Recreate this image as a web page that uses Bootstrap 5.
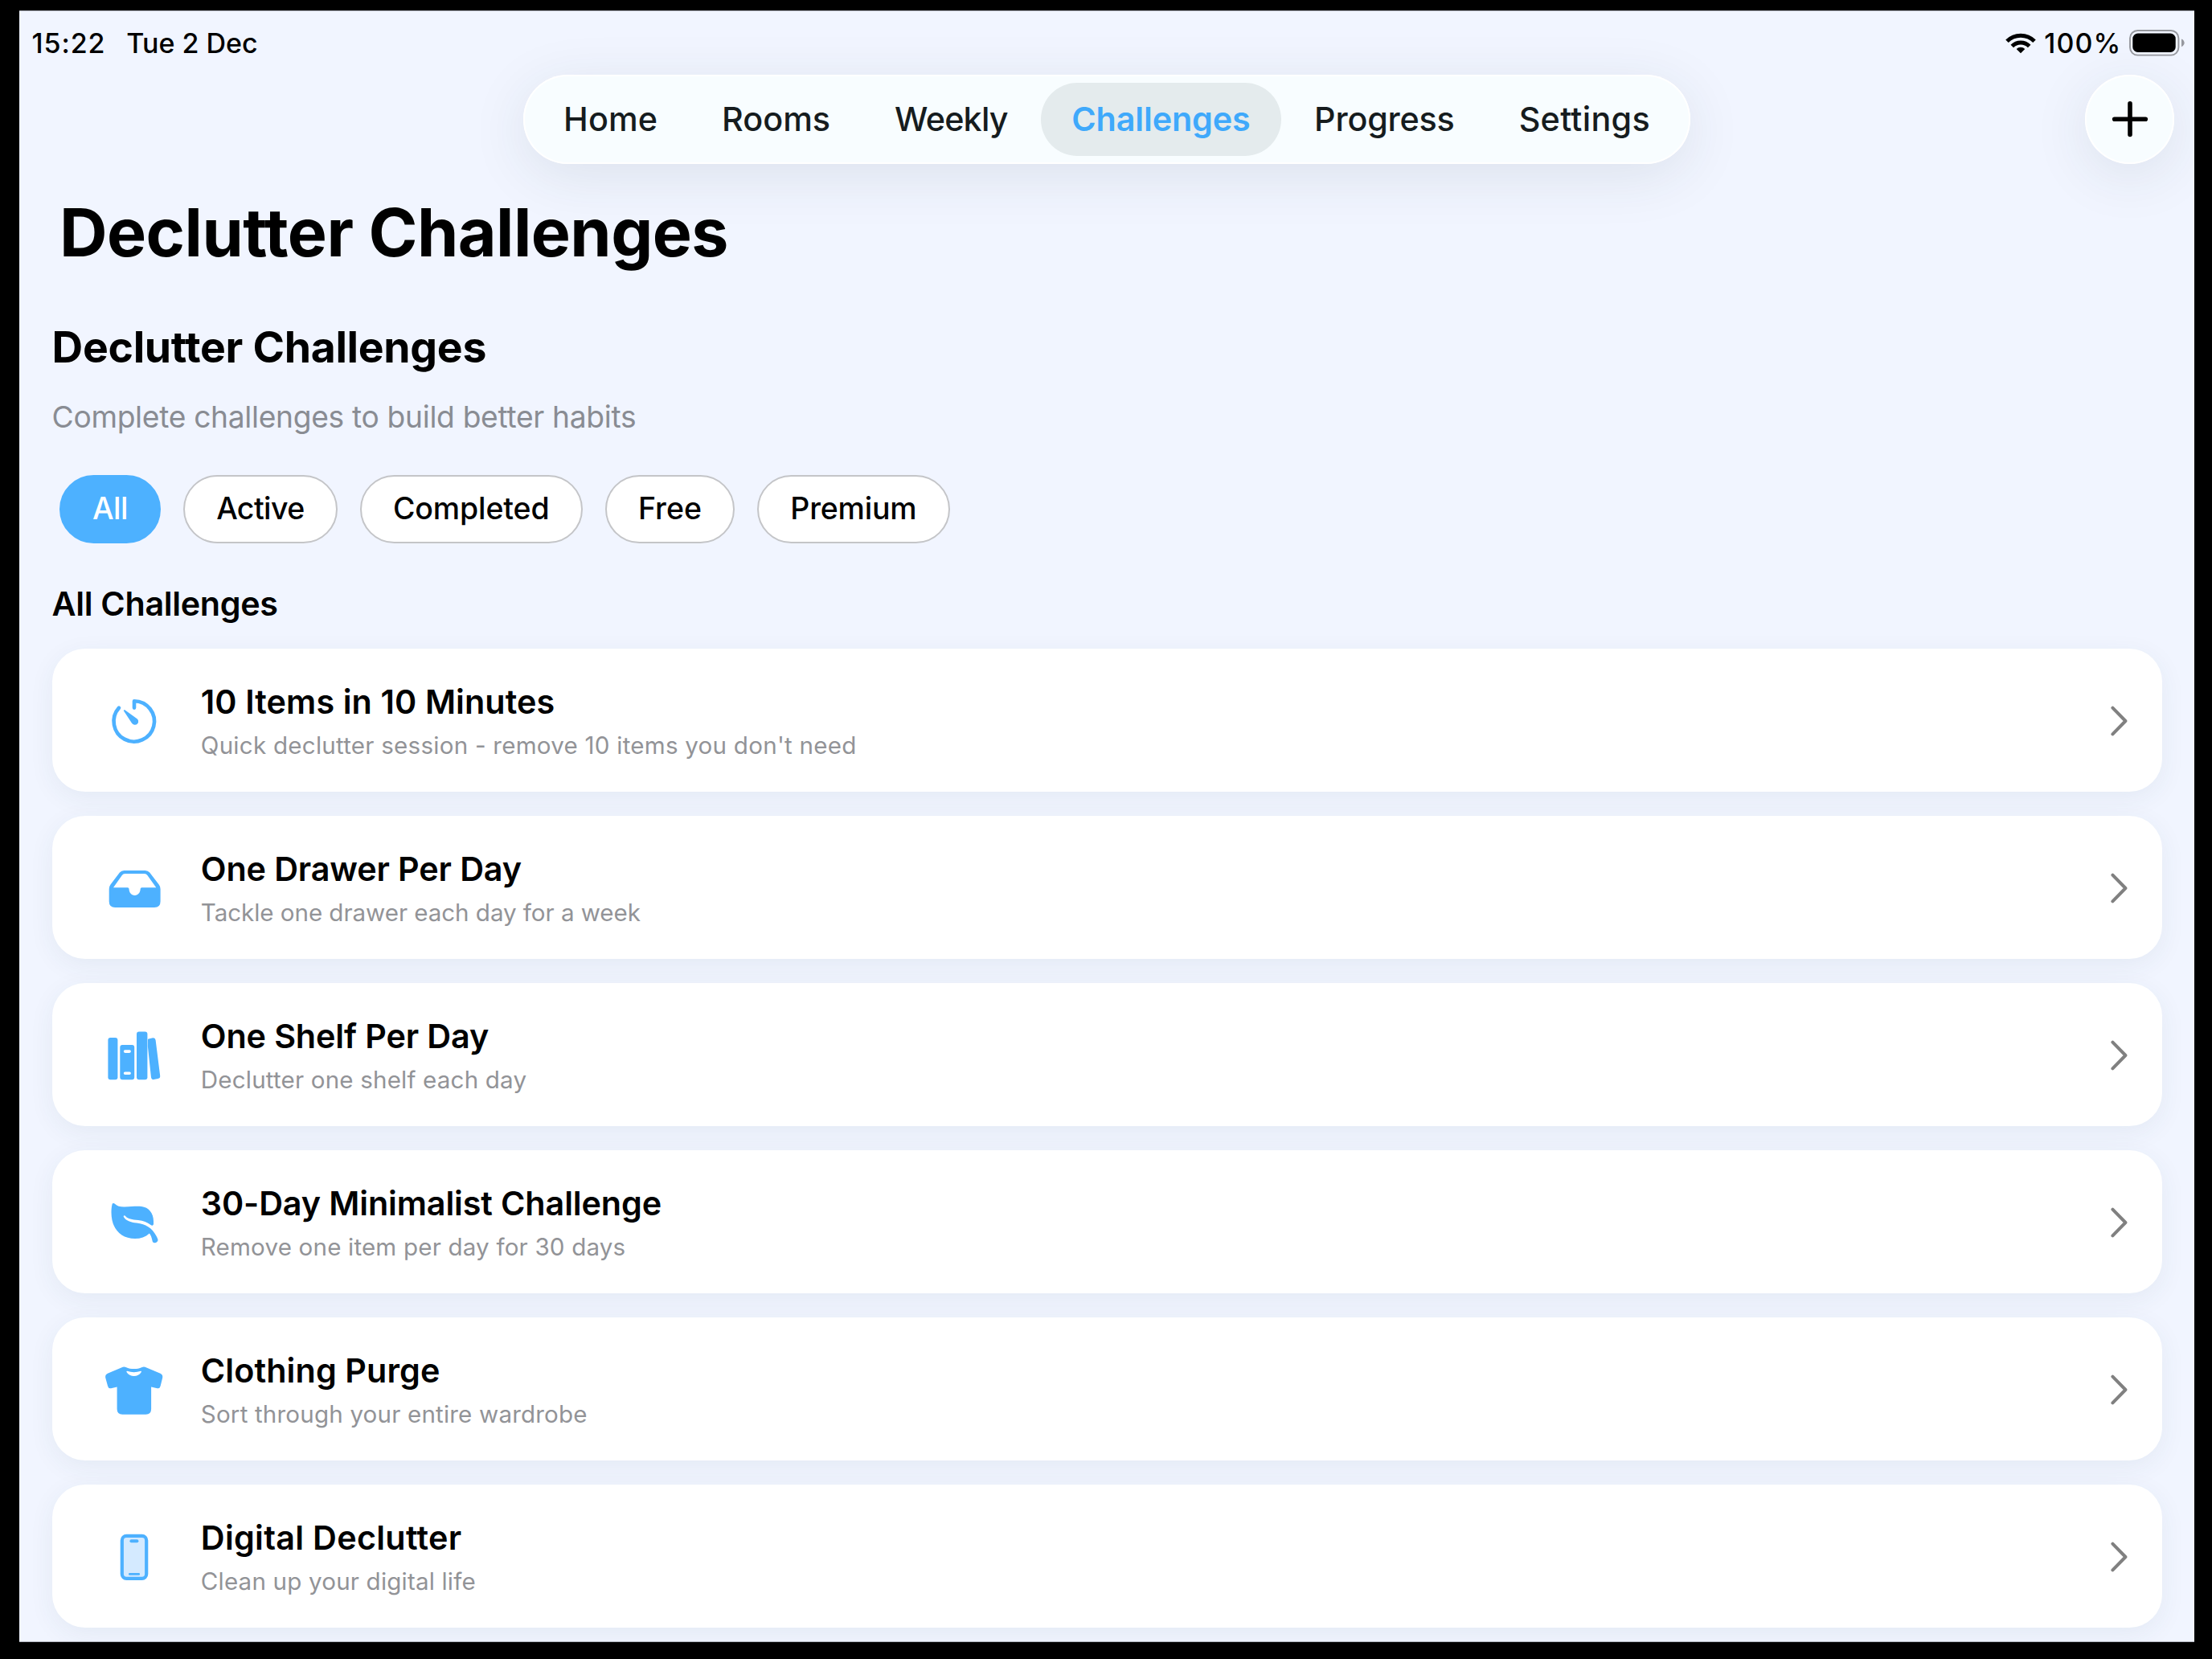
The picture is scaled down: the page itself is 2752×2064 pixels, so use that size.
<!DOCTYPE html>
<html lang="en">
<head>
<meta charset="utf-8">
<meta name="viewport" content="width=device-width, initial-scale=1">
<title>Declutter Challenges</title>
<link href="https://cdn.jsdelivr.net/npm/bootstrap@5.3.0/dist/css/bootstrap.min.css" rel="stylesheet">
<script src="https://cdn.jsdelivr.net/npm/bootstrap@5.3.0/dist/js/bootstrap.bundle.min.js" defer></script>
<style>
  :root { --sky: #4db1ff; --paper: #f1f5ff; --glass: #f8fdff; }
  html, body { height: 2064px; }
  body {
    font-family: Inter, "Liberation Sans", sans-serif;
    color: #000; background: #000; overflow: hidden;
    padding: 13px 22px 21px 24px;
  }
  .screen {
    height: 2030px; background: var(--paper); overflow: hidden;
    box-shadow: inset 0 1px 0 #b3b6bf, inset 0 -1px 0 #b3b6bf;
  }
  svg { display: block; flex: none; }

  .status-bar { height: 80.3px; padding: 1px 12.5px 0 15.5px; font-size: 34px; font-weight: 500; line-height: 40px; }
  .clock { letter-spacing: .9px; margin-right: 26px; }
  .charge { letter-spacing: 1.1px; margin: 0 9.1px 0 10.5px; }

  .top-row { height: 110.4px; padding: 0 25px; }
  .side { flex: 1 1 0; }
  .tab-pill, .add-btn { background: var(--glass); box-shadow: inset 0 0 0 2px #fff, 0 14px 70px rgba(40, 55, 70, .1); }
  .tab-pill { border-radius: 55.2px; padding: 10px; }
  .tab-pill .nav-link {
    height: 90.4px; padding: 0 40px; border-radius: 45.2px;
    font-size: 41.3px; font-weight: 500; line-height: 91.2px; color: #161c1e; white-space: nowrap;
  }
  .tab-pill .nav-link.active { background: #e4ebed; color: #3fa9fb; font-weight: 600; padding: 0 38.3px; margin: 0 1.2px; letter-spacing: -.13px; }
  .add-btn { width: 110.6px; height: 110.4px; padding: 0; border: 0; border-radius: 50%; }

  .page-title { font-size: 82.5px; font-weight: 700; line-height: 100px; letter-spacing: -.55px; margin: 35.3px 0 0 50px; }
  .content { padding: 60px 40.3px 0 40.6px; }
  .hero-title { font-size: 53.5px; font-weight: 700; line-height: 66px; letter-spacing: -.31px; margin: 0; }
  .hero-sub { font-size: 37.2px; line-height: 46px; letter-spacing: -.32px; color: #898c93; margin: 31.4px 0 48.8px; }
  .chips { gap: 28.2px; padding-left: 9.4px; }
  .chip {
    height: 85px; padding: 0 39.1px; border: 2.2px solid #c4c5c8; border-radius: 42.5px;
    background: #fff; color: #000; font-size: 37.5px; font-weight: 500; line-height: 80.6px;
  }
  .chip.active { background: var(--sky); border-color: var(--sky); color: #fff; }
  .section-title { font-size: 41.3px; font-weight: 600; line-height: 50px; letter-spacing: -.33px; margin: 49.6px 0 31.3px; }

  .challenges { gap: 30px; }
  .challenge {
    height: 178px; padding: 1px 42.8px 0 62px; border: 0; border-radius: 41px; background: #fff;
    box-shadow: 0 8px 32px rgba(40, 70, 90, .065);
  }
  .challenge-body { padding-left: 43.2px; }
  .challenge-name { font-size: 41.3px; font-weight: 600; line-height: 50px; margin: 0 0 10px; }
  .challenge-note { font-size: 29.6px; line-height: 38px; letter-spacing: .17px; color: #929397; margin: 0; }
  .glyph { fill: var(--sky); color: var(--sky); }
  .chevron { fill: none; stroke: #808080; stroke-width: 4; stroke-linecap: round; stroke-linejoin: round; }

  .tight-1 { letter-spacing: -.12px; }
  .tight-2 { letter-spacing: -.2px; }
  .tight-6 { letter-spacing: -.6px; }
  .tight-8 { letter-spacing: -.79px; }
  .loose-1 { letter-spacing: .1px; }
  .loose-3 { letter-spacing: .29px; }
  .note-wide { letter-spacing: .23px; }
  .note-tight { letter-spacing: -.06px; }
</style>
</head>
<body>
<main class="screen d-flex flex-column">

  <div class="status-bar d-flex align-items-center flex-shrink-0">
    <span class="clock">15:22</span>
    <span>Tue 2 Dec</span>
    <div class="d-flex align-items-center ms-auto">
      <svg width="38" height="26" viewBox="0 0 38 26" fill="none" stroke="#000" stroke-width="5">
        <path d="M2 10.2a24 24 0 0 1 34 0"/>
        <path d="M8.3 16.6a15 15 0 0 1 21.4 0"/>
        <path d="M19 25.3l5.3-5.2a7.4 7.4 0 0 0-10.6 0z" fill="#000" stroke="none"/>
      </svg>
      <span class="charge">100%</span>
      <svg width="69" height="33" viewBox="0 0 69 33">
        <rect x="1" y="1" width="60.4" height="30.6" rx="9.5" fill="none" stroke="#96989e" stroke-width="1.9"/>
        <rect x="4.3" y="4.6" width="53.4" height="23.4" rx="6.5"/>
        <path d="M65 11.4c4.8 1.8 4.8 8 0 9.8z" fill="#96989e"/>
      </svg>
    </div>
  </div>

  <div class="top-row d-flex align-items-center flex-shrink-0">
    <div class="side"></div>
    <nav class="tab-pill nav flex-nowrap">
      <a class="nav-link loose-1" href="#">Home</a>
      <a class="nav-link" href="#">Rooms</a>
      <a class="nav-link tight-8" href="#">Weekly</a>
      <a class="nav-link active" href="#">Challenges</a>
      <a class="nav-link tight-2" href="#">Progress</a>
      <a class="nav-link loose-3" href="#">Settings</a>
    </nav>
    <div class="side d-flex justify-content-end">
      <button class="add-btn d-flex align-items-center justify-content-center" aria-label="Add">
        <svg width="46" height="46" viewBox="0 0 46 46" fill="none" stroke="#000" stroke-width="5.6" stroke-linecap="round"><path d="M23 3.900v38.600M3.700 23.200h38.600"/></svg>
      </button>
    </div>
  </div>

  <h1 class="page-title">Declutter Challenges</h1>

  <section class="content">
    <h2 class="hero-title">Declutter Challenges</h2>
    <p class="hero-sub">Complete challenges to build better habits</p>

    <div class="chips d-flex">
      <button class="chip active tight-6">All</button>
      <button class="chip tight-6">Active</button>
      <button class="chip tight-1">Completed</button>
      <button class="chip">Free</button>
      <button class="chip tight-2">Premium</button>
    </div>

    <h3 class="section-title">All Challenges</h3>

    <div class="challenges d-flex flex-column">

      <article class="challenge card flex-row align-items-center">
        <svg class="glyph" width="80" height="80" viewBox="0 0 80 80">
          <path d="M40 23.600V15.200a25.200 25.200 0 1 1-19 8.400" fill="none" stroke="currentColor" stroke-width="4.600" stroke-linecap="round" stroke-linejoin="round"/>
          <path d="M27 27.600c-.5-.9.4-1.800 1.300-1.300l14.200 10.100a4.400 4.400 0 1 1-5.600 6.200z"/>
        </svg>
        <div class="challenge-body flex-grow-1">
          <h4 class="challenge-name loose-1">10 Items in 10 Minutes</h4>
          <p class="challenge-note note-wide">Quick declutter session - remove 10 items you don't need</p>
        </div>
        <svg class="chevron" width="21" height="38" viewBox="0 0 21 38"><path d="M2.400 2.600l16 16.400-16 16.400"/></svg>
      </article>

      <article class="challenge card flex-row align-items-center">
        <svg class="glyph" width="80" height="80" viewBox="0 0 80 80">
          <path fill-rule="evenodd" d="M8.700 41q0-3.200 1.800-5.600L21.900 20.600Q24 18 27.400 18H53.600Q57 18 59.200 20.600L70.700 35.400Q72.600 37.800 72.600 41V56.500Q72.600 64 65 64H16.300Q8.700 64 8.700 56.500ZM14 39.300H31.800Q33.400 39.300 33.500 40.800C33.700 45.500 36.300 48.900 40.600 48.900S47.500 45.500 47.700 40.800Q47.800 39.300 49.400 39.300H67.300L56.400 24Q55 22 52.800 22H28.400Q26.200 22 24.800 24Z"/>
        </svg>
        <div class="challenge-body flex-grow-1">
          <h4 class="challenge-name tight-1">One Drawer Per Day</h4>
          <p class="challenge-note note-tight">Tackle one drawer each day for a week</p>
        </div>
        <svg class="chevron" width="21" height="38" viewBox="0 0 21 38"><path d="M2.400 2.600l16 16.400-16 16.400"/></svg>
      </article>

      <article class="challenge card flex-row align-items-center">
        <svg class="glyph" width="80" height="80" viewBox="0 0 80 80">
          <rect x="7.400" y="18" width="12" height="52.300" rx="3"/>
          <path fill-rule="evenodd" d="M25.300 27H37.200Q40.200 27 40.200 30V67.300Q40.200 70.300 37.200 70.300H25.300Q22.300 70.300 22.300 67.300V30Q22.300 27 25.300 27ZM28.600 33.300a1.800 1.800 0 0 0 0 3.600h5.500a1.800 1.800 0 0 0 0-3.600ZM28.600 60.400a1.800 1.800 0 0 0 0 3.600h5.500a1.800 1.800 0 0 0 0-3.600Z"/>
          <rect x="43" y="10.400" width="13.400" height="59.900" rx="3"/>
          <path d="M57 20.300Q57 19.700 57.800 19.500L63.200 18.300Q66.200 17.900 66.600 20.900L72.200 65.400Q72.500 68.400 69.500 68.900L64.300 70.100Q61.400 70.400 61 67.500L56.900 29Z"/>
        </svg>
        <div class="challenge-body flex-grow-1">
          <h4 class="challenge-name tight-1">One Shelf Per Day</h4>
          <p class="challenge-note">Declutter one shelf each day</p>
        </div>
        <svg class="chevron" width="21" height="38" viewBox="0 0 21 38"><path d="M2.400 2.600l16 16.400-16 16.400"/></svg>
      </article>

      <article class="challenge card flex-row align-items-center">
        <svg class="glyph" width="80" height="80" viewBox="0 0 80 80">
          <path d="M12.500 17.400C12.800 16 14.600 15.500 15.900 16.700C19 19.700 22.500 20.600 28 20.500C36 20.300 42 19.300 49 19.900C58 20.800 63.800 28 64 38.200V41.500C64 43.600 62.300 44.300 60.600 42.900C56 39.300 51.500 37.600 45 36.900C37 36.200 32.300 35.600 29.300 32.200C27.900 30.600 26 31.400 27 33.200C29.800 37.700 35.500 39.600 43 40.600C55 42.200 60.600 46.200 65.500 53.500C67.500 56.600 69 59.300 69.500 61.600C69.700 63.500 67.300 65.500 65.200 65.300C63.600 65.100 62.800 64.100 62.500 62.400C61.700 58.400 60.600 55.600 58.900 53.400C54 57.800 48 60 41 60C22.500 60 11.600 47 11.500 27.500C11.500 23.500 11.800 20.400 12.500 17.400Z"/>
        </svg>
        <div class="challenge-body flex-grow-1">
          <h4 class="challenge-name tight-1">30-Day Minimalist Challenge</h4>
          <p class="challenge-note">Remove one item per day for 30 days</p>
        </div>
        <svg class="chevron" width="21" height="38" viewBox="0 0 21 38"><path d="M2.400 2.600l16 16.400-16 16.400"/></svg>
      </article>

      <article class="challenge card flex-row align-items-center">
        <svg class="glyph" width="80" height="80" viewBox="0 0 80 80">
          <path fill-rule="evenodd" d="M25.800 11.700Q27.700 11 29.600 11.900C36 14.800 43.300 14.800 49.700 11.900Q51.600 11 53.500 11.700L72.500 19.800Q75.800 21.300 75.200 25L72.600 35.500Q71.800 38.800 68.600 38.200L61.100 36.600V64Q61.100 70.700 54.400 70.700H25.300Q18.600 70.700 18.600 64V36.600L11.200 38.200Q7.900 38.900 7.100 35.500L4.200 25Q3.600 21.300 6.900 19.800ZM31.200 16.800Q30 16.700 30.500 17.900C34.500 24.700 45 24.700 48.800 17.900Q49.300 16.700 48.100 16.800C42.500 18.700 37 18.700 31.200 16.800Z"/>
        </svg>
        <div class="challenge-body flex-grow-1">
          <h4 class="challenge-name loose-1">Clothing Purge</h4>
          <p class="challenge-note">Sort through your entire wardrobe</p>
        </div>
        <svg class="chevron" width="21" height="38" viewBox="0 0 21 38"><path d="M2.400 2.600l16 16.400-16 16.400"/></svg>
      </article>

      <article class="challenge card flex-row align-items-center">
        <svg class="glyph" width="80" height="80" viewBox="0 0 80 80">
          <rect x="24.800" y="13.900" width="30.400" height="52.900" rx="5.500" fill="#d4eaff" stroke="currentColor" stroke-width="4.200"/>
          <rect x="34.400" y="18.300" width="11" height="4" rx="2"/>
          <rect x="33" y="60" width="14" height="2.700" rx="1.300"/>
        </svg>
        <div class="challenge-body flex-grow-1">
          <h4 class="challenge-name loose-3">Digital Declutter</h4>
          <p class="challenge-note">Clean up your digital life</p>
        </div>
        <svg class="chevron" width="21" height="38" viewBox="0 0 21 38"><path d="M2.400 2.600l16 16.400-16 16.400"/></svg>
      </article>

    </div>
  </section>
</main>
</body>
</html>
